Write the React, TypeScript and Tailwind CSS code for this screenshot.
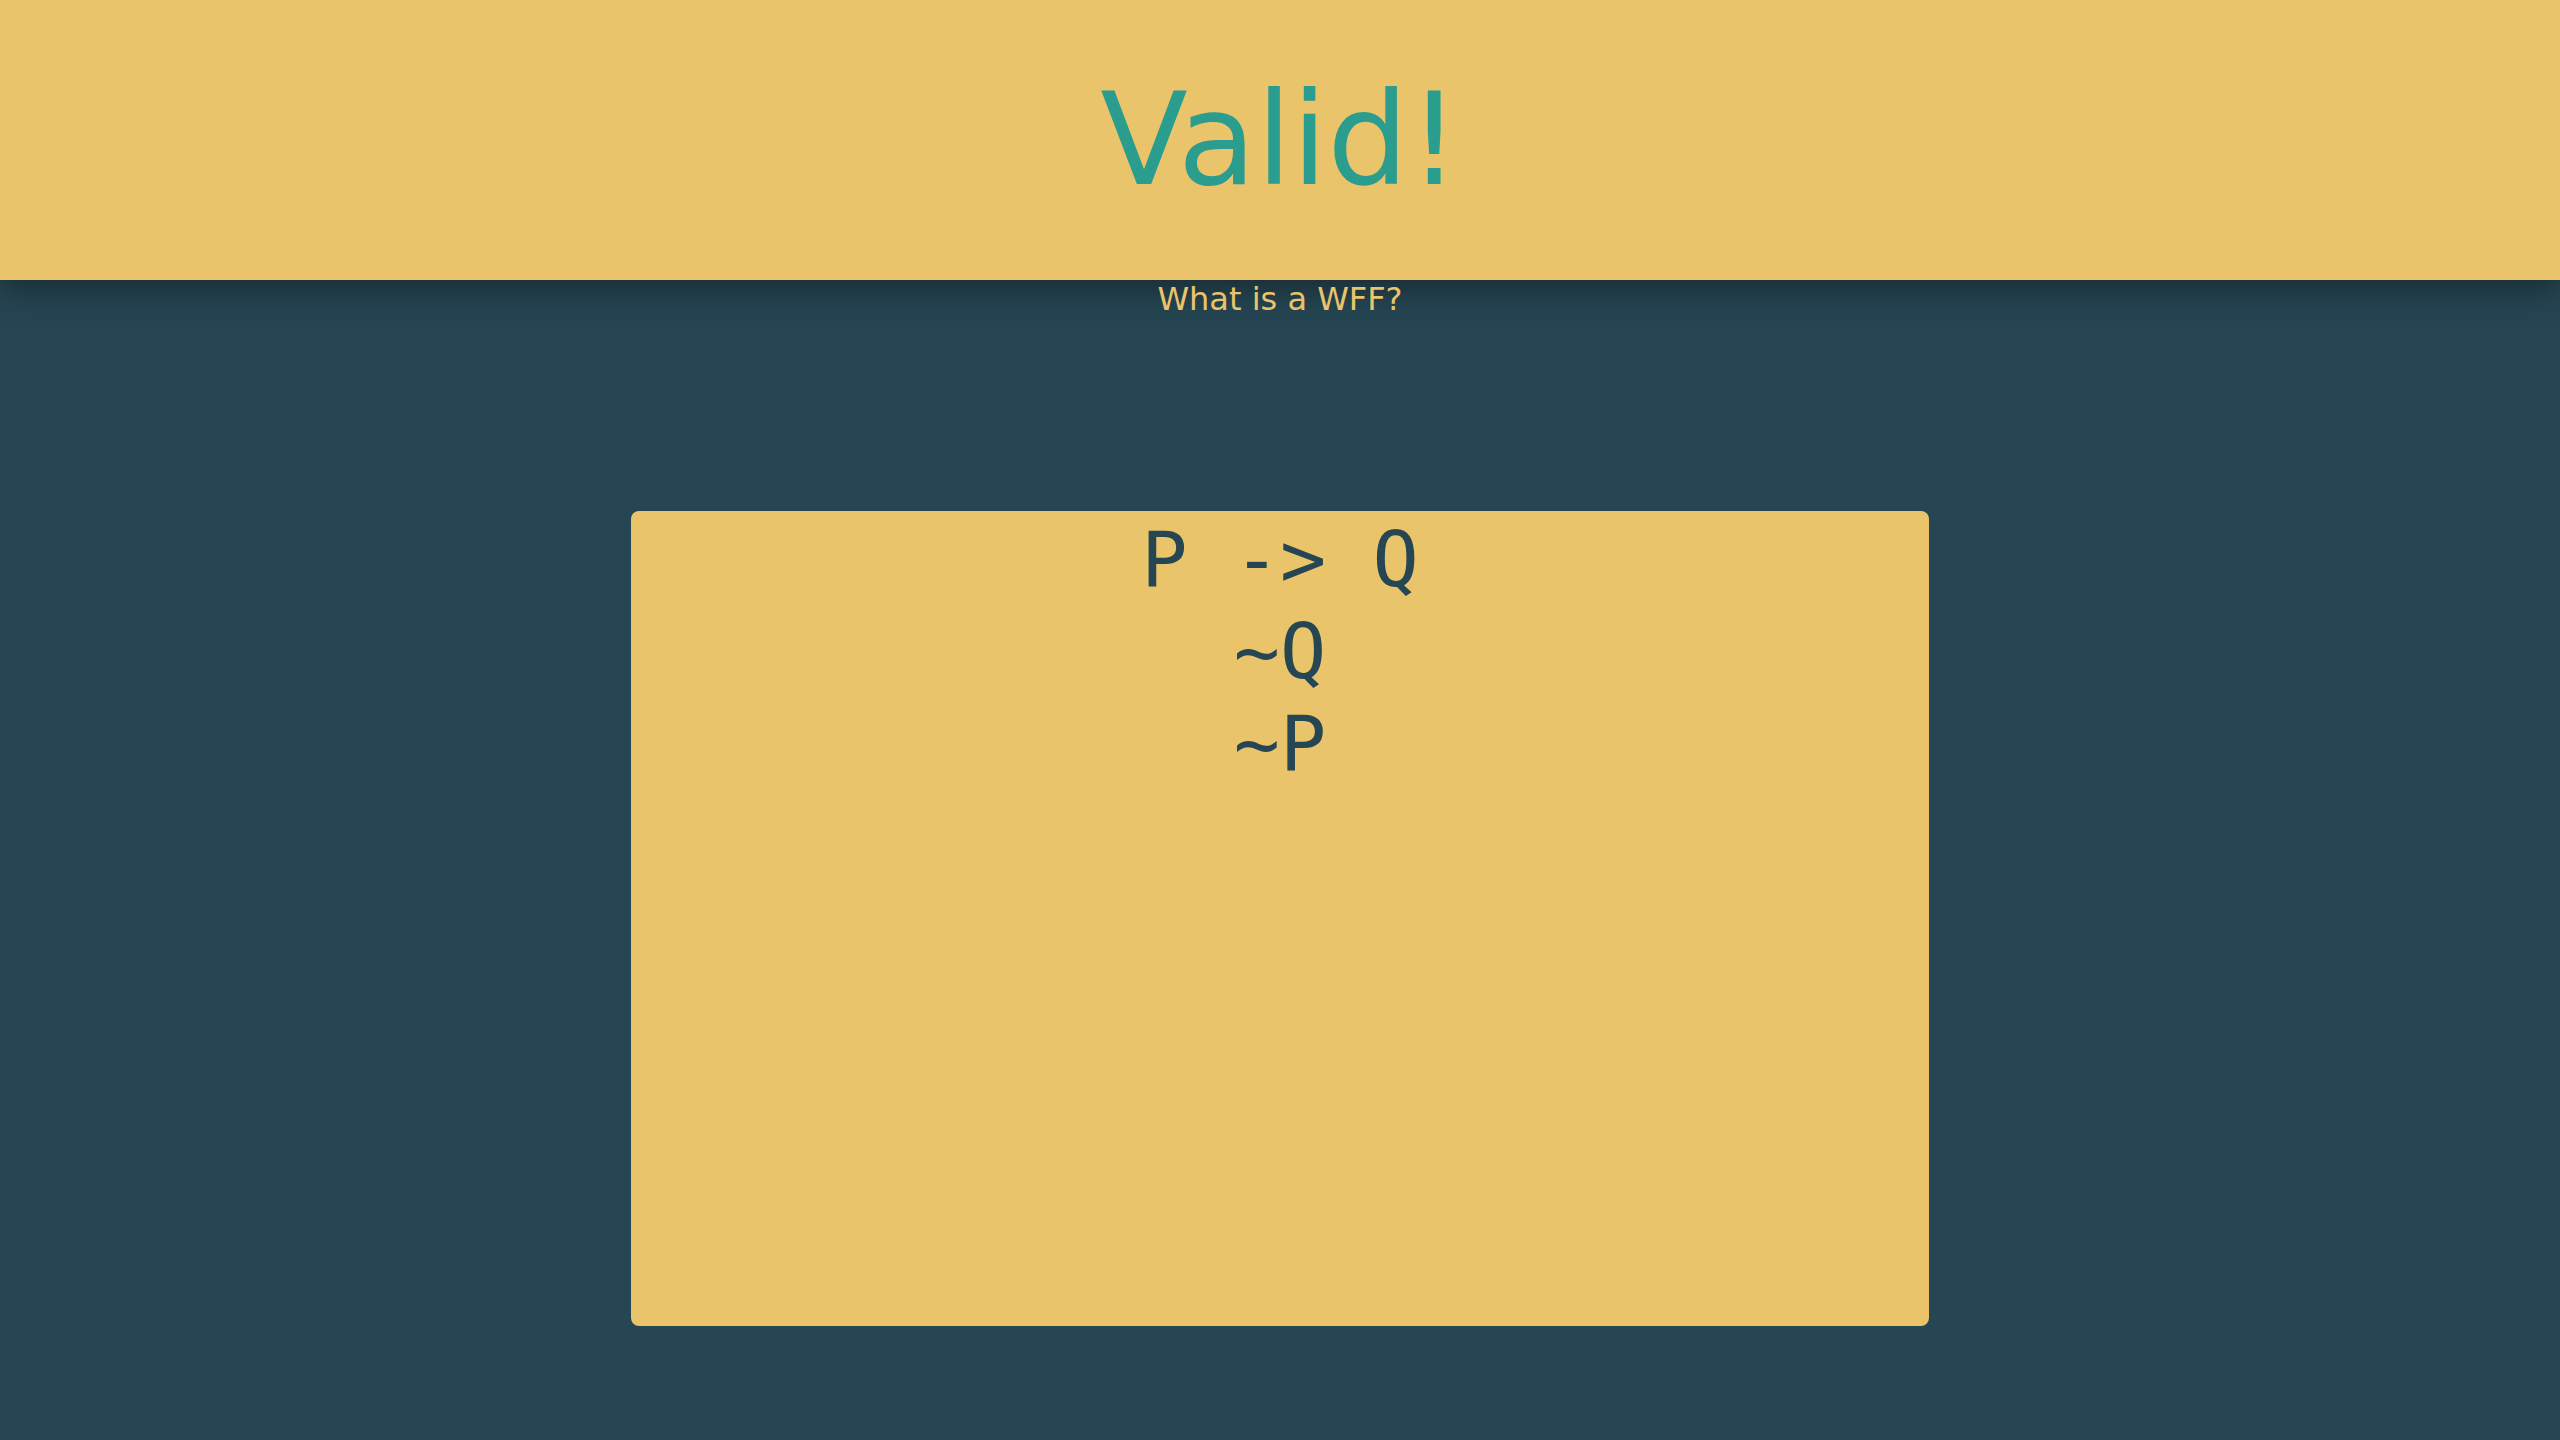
const lines = ["P -> Q", "~Q", "~P"]

export default function App() {
  return (
    <div className="min-h-screen bg-[#264653] font-['DejaVu_Sans',sans-serif]">
      <header className="flex h-[280px] items-center justify-center bg-[#e9c46a] shadow-[0_6px_36px_rgba(0,0,0,0.45)]">
        <h1 className="text-[128px] leading-none text-[#2a9d8f]">Valid!</h1>
      </header>

      <p className="text-center text-[32px] leading-[normal] text-[#e9c46a]">
        What is a WFF?
      </p>

      <main className="mt-[193px] flex justify-center">
        <div className="h-[815px] w-[1298px] rounded-lg bg-[#e9c46a] pt-[3px] text-center font-['DejaVu_Sans_Mono',monospace] text-[76.8px] leading-[1.2] whitespace-pre text-[#264653]">
          {lines.map((line) => (
            <div key={line}>{line}</div>
          ))}
        </div>
      </main>
    </div>
  )
}
